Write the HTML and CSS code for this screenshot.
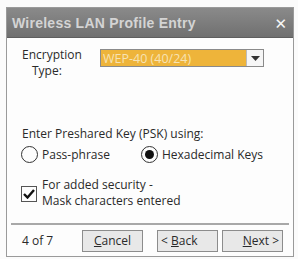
FILE: index.html
```html
<!DOCTYPE html>
<html>
<head>
<meta charset="utf-8">
<link rel="stylesheet" href="styles.css">
</head>
<body>
<div class="window">
  <div class="titlebar">
    <span class="title">Wireless LAN Profile Entry</span>
    <span class="close">&#x2715;</span>
  </div>
  <div class="content">
    <div class="row-enc">
      <div class="label">Encryption<br><span class="indent">Type:</span></div>
      <div class="select">
        <span class="select-text">WEP-40 (40/24)</span>
        <span class="select-btn"><svg width="9" height="5" viewBox="0 0 9 5"><path d="M0 0h9L4.5 5z" fill="#333"/></svg></span>
      </div>
    </div>
    <div class="psk-label">Enter Preshared Key (PSK) using:</div>
    <div class="radios">
      <label class="radio"><span class="circle"></span>Pass-phrase</label>
      <label class="radio"><span class="circle on"></span>Hexadecimal Keys</label>
    </div>
    <div class="check-row">
      <span class="checkbox"><svg width="12" height="10" viewBox="0 0 12 10"><path d="M1 5l3.5 3.5L11 1" fill="none" stroke="#111" stroke-width="2.4"/></svg></span>
      <span class="check-text">For added security -<br>Mask characters entered</span>
    </div>
  </div>
  <div class="footer">
    <span class="page">4 of 7</span>
    <span class="btn btn-cancel"><span><u>C</u>ancel</span></span>
    <span class="btn btn-back"><span>&lt; <u>B</u>ack</span></span>
    <span class="btn btn-next"><span><u>N</u>ext &gt;</span></span>
  </div>
</div>
</body>
</html>
```
FILE: styles.css
```css
html, body {
  margin: 0;
  padding: 0;
  background: #fbfbfb;
}
body {
  font-family: "Open Sans", "DejaVu Sans", sans-serif;
  font-size: 12px;
  color: #2a2a2a;
}
.window {
  margin: 7px 0 0 6px;
  width: 288px;
  height: 250px;
  box-sizing: border-box;
  border: 1px solid #9a9a9a;
  background: #fdfdfd;
  display: flex;
  flex-direction: column;
}
.titlebar {
  height: 29px;
  background: linear-gradient(#8a8a8a, #707070);
  display: flex;
  align-items: center;
  justify-content: space-between;
  padding: 0 6px 0 5px;
  border-bottom: 1px solid #5e5e5e;
}
.title {
  color: #d4d4d4;
  font-family: "Liberation Sans", sans-serif;
  font-weight: bold;
  font-size: 14px;
  letter-spacing: 0.25px;
}
.close {
  color: #f6f6f6;
  font-weight: bold;
  font-size: 15px;
}
.content {
  flex: 1;
  padding: 9px 0 0 15px;
  display: flex;
  flex-direction: column;
}
.row-enc {
  display: flex;
  align-items: flex-start;
}
.label {
  width: 78px;
  line-height: 16px;
}
.indent {
  padding-left: 10px;
}
.select {
  margin-top: 2px;
  width: 164px;
  height: 18px;
  box-sizing: border-box;
  border: 1px solid #8a8a8a;
  background: #eeb43a;
  display: flex;
  align-items: center;
}
.select-text {
  flex: 1;
  color: #f7e3b5;
  padding-left: 2px;
  font-size: 12.5px;
}
.select-btn {
  width: 16px;
  height: 16px;
  background: #f6f6f6;
  border-left: 1px solid #bcbcbc;
  display: flex;
  align-items: center;
  justify-content: center;
}
.psk-label {
  margin-top: 46px;
}
.radios {
  display: flex;
  margin-top: 4px;
  margin-left: -1px;
}
.radio {
  display: flex;
  align-items: center;
  gap: 4px;
}
.radio + .radio {
  margin-left: 31px;
}
.circle {
  width: 17px;
  height: 17px;
  box-sizing: border-box;
  border: 1.5px solid #333;
  border-radius: 50%;
  display: flex;
  align-items: center;
  justify-content: center;
}
.circle.on::after {
  content: "";
  width: 9px;
  height: 9px;
  border-radius: 50%;
  background: #111;
}
.check-row {
  display: flex;
  align-items: flex-start;
  margin-top: 14px;
}
.checkbox {
  margin-top: 9px;
  width: 16px;
  height: 16px;
  box-sizing: border-box;
  border: 1.5px solid #555;
  display: flex;
  align-items: center;
  justify-content: center;
  margin-right: 5px;
  margin-left: -1px;
}
.check-text {
  line-height: 16px;
}
.footer {
  margin: 0 4px;
  border-top: 2px solid #a8a8a8;
  height: 31px;
  display: flex;
  align-items: center;
  padding-left: 11px;
}
.page {
  width: 60px;
}
.btn {
  height: 22px;
  box-sizing: border-box;
  border: 1px solid #8c8c8c;
  background: #e8e8e8;
  display: flex;
  align-items: center;
}
.btn-cancel {
  width: 61px;
  justify-content: center;
}
.btn-back {
  width: 61px;
  margin-left: 14px;
  padding-left: 3px;
}
.btn-next {
  width: 61px;
  margin-left: 4px;
  justify-content: flex-end;
  padding-right: 3px;
}
```
